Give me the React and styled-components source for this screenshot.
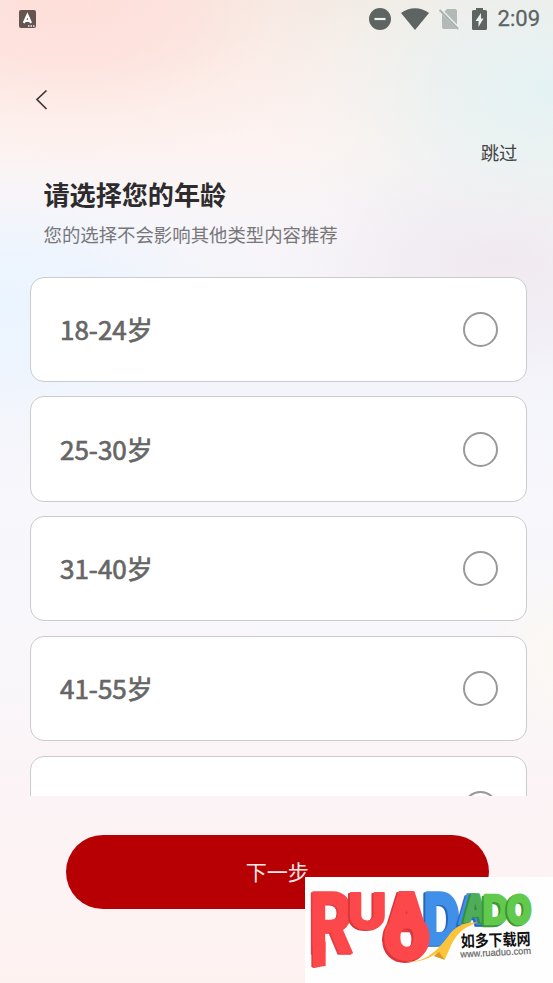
import React from "react";
import styled, { createGlobalStyle } from "styled-components";

const ages = ["18-24岁", "25-30岁", "31-40岁", "41-55岁", ""];

const GlobalStyle = createGlobalStyle`
    body {
        margin : 0;
    }
    * {
        box-sizing : border-box;
    }
`;

const Screen = styled.div`
    position : relative;
    display : flex;
    flex-direction : column;
    width : 553px;
    height : 983px;
    overflow : hidden;
    font-family : "Noto Sans CJK SC", sans-serif;
    background :
        radial-gradient(ellipse 300px 170px at 70px 0, #ffdfda 0%, rgba(255, 224, 219, 0.8) 35%, rgba(255, 230, 225, 0.3) 70%, rgba(255, 235, 230, 0) 100%),
        radial-gradient(ellipse 300px 180px at 553px 90px, #e4f2f3 0%, rgba(230, 242, 242, 0.7) 40%, rgba(236, 243, 241, 0.25) 72%, rgba(240, 243, 240, 0) 100%),
        radial-gradient(ellipse 290px 150px at 0 305px, #ebf5ff 0%, rgba(236, 245, 255, 0.75) 40%, rgba(240, 246, 255, 0.25) 75%, rgba(243, 246, 255, 0) 100%),
        radial-gradient(ellipse 240px 150px at 500px 260px, #f0e9f0 0%, rgba(241, 235, 242, 0.7) 45%, rgba(243, 238, 244, 0.2) 75%, rgba(245, 240, 246, 0) 100%),
        radial-gradient(ellipse 70px 100px at 553px 655px, #fbf8f3 0%, rgba(251, 248, 243, 0) 100%),
        linear-gradient(#f3ebe4 0, #fbf0ec 80px, #fdf3f1 140px, #f8f5f8 220px, #f3f4fa 350px, #f7f7fc 500px, #f9f7fa 680px, #fcf3f6 800px, #fdf3f4 880px, #fef2f1 983px);
`;

const StatusBar = styled.div`
    display : flex;
    align-items : center;
    justify-content : space-between;
    height : 37px;
    padding : 0 13px 0 19px;
`;

const StatusIcons = styled.div`
    display : flex;
    align-items : center;
    color : #5d6462;
`;

const Icon = styled.svg`
    display : block;
    margin-right : ${(props) => props.$gap || 0}px;
`;

const Time = styled.span`
    font-family : Roboto, sans-serif;
    font-size : 22px;
    font-weight : 400;
    line-height : 38px;
    -webkit-text-stroke : 0.3px #5d6462;
`;

const NavBar = styled.div`
    display : flex;
    align-items : center;
    height : 125px;
    padding-left : 34px;
`;

const BackButton = styled.button`
    padding : 0;
    border : 0;
    background : none;
`;

const Header = styled.header`
    display : flex;
    flex-direction : column;
    height : 127px;
    margin-top : -24px;
    padding : 0 35.5px 0 43.5px;
`;

const Skip = styled.a`
    align-self : flex-end;
    color : #444;
    font-size : 18.4px;
    line-height : 28px;
`;

const Title = styled.h1`
    margin : 9px 0 0;
    color : #2d2b2d;
    font-size : 26.1px;
    font-weight : 700;
    line-height : 38px;
`;

const Subtitle = styled.p`
    margin : 7px 0 0;
    color : #77777a;
    font-size : 18.4px;
    line-height : 28px;
`;

const AgeList = styled.div`
    display : flex;
    flex-direction : column;
    gap : 14.6px;
    height : 519px;
    margin : 11.7px 26.5px 0 29.5px;
    overflow : hidden;
`;

const AgeCard = styled.label`
    display : flex;
    flex-shrink : 0;
    align-items : center;
    justify-content : space-between;
    height : 105.2px;
    padding : 0 27.3px 1px 29.5px;
    border : 1.5px solid #cbcbcd;
    border-radius : 14px;
    background : #fff;
`;

const AgeText = styled.span`
    color : #666;
    font-size : 26px;
    line-height : 36px;
    -webkit-text-stroke : 0.7px #666;
`;

const Radio = styled.span`
    width : 35px;
    height : 35px;
    margin-top : 1px;
    border : 2px solid #999;
    border-radius : 50%;
`;

const NextButton = styled.button`
    width : 422.5px;
    height : 73.5px;
    margin : 39.5px 0 0 66px;
    padding : 0 0 1px;
    border : 0;
    border-radius : 37px;
    background : #b70004;
    color : #fbe9e6;
    font-family : inherit;
    font-size : 21px;
`;

const Watermark = styled.div`
    position : absolute;
    right : 0;
    bottom : 0;
    width : 248px;
    height : 106px;
    background : #fefefe;
`;

const LogoLetter = styled.text`
    font-family : Inter, "Open Sans", sans-serif;
    font-size : 100px;
    font-weight : 800;
    stroke-linejoin : round;
`;

// letter with a darker copy behind it for the 3D edge
const Letter = ({ children, transform, fill, side, depth = -6, weight = 2 }) => (
    <g>
        <LogoLetter transform={`translate(${depth} 4) ${transform}`} fill={side} stroke={side} strokeWidth={weight}>{children}</LogoLetter>
        <LogoLetter transform={transform} fill={fill} stroke={fill} strokeWidth={weight}>{children}</LogoLetter>
    </g>
);

const Logo = () => (
    <svg width="248" height="106" viewBox="15 21 744 318">
        <Letter transform="matrix(2 0 0 2.5 28 249)" fill="#fc484b" side="#e03e42" depth={-5}>R</Letter>
        <path d="M34 225 H60 V290 L40 294 L34 290Z" fill="#e03e42" />
        <path d="M39 215 H77 V288 L39 293Z" fill="#fc484b" />
        <Letter transform="matrix(1.6 0 0 1.5 144 176)" fill="#fc484b" side="#d8383c" weight={4}>U</Letter>
        <Letter transform="matrix(1.5 0 0 2.1 371 221)" fill="#408fe9" side="#2467bd" weight={5}>D</Letter>
        <Letter transform="matrix(1.75 0 0 1.9 253 206)" fill="#fc484b" side="#d8383c" weight={6}>A</Letter>
        <Letter transform="matrix(1.7 0 0 1.62 255 262)" fill="#fc484b" side="#d8383c" weight={11}>O</Letter>
        <Letter transform="matrix(1.05 0 0 1.25 473 163)" fill="#408fe9" side="#2467bd" weight={4}>A</Letter>
        <Letter transform="matrix(.95 0 0 1.15 490 156)" fill="#4fad57" side="#358a41" weight={4}>A</Letter>
        <Letter transform="matrix(1.1 0 0 1.2 548 163)" fill="#62c94c" side="#39963a" weight={6}>D</Letter>
        <Letter transform="matrix(.95 0 0 1.18 621 162)" fill="#62c94c" side="#39963a" weight={8}>O</Letter>
        <path d="M320 275 C375 278 410 245 442 202 C465 170 490 155 532 158 C490 170 470 193 455 222 L434 269 L402 258 L410 249 C385 268 350 279 320 275Z" fill="#fbc43b" />
        <path d="M402 258 L417 246 L434 269Z" fill="#dd9826" />
        <text x="482" y="228" textLength="210" lengthAdjust="spacingAndGlyphs" fontFamily="Noto Sans CJK SC, sans-serif" fontWeight="700" fontSize="49" fill="#111" transform="rotate(-2 590 210)">如多下载网</text>
        <text x="481" y="257" textLength="212" lengthAdjust="spacingAndGlyphs" fontFamily="Liberation Sans, sans-serif" fontSize="29" fill="#666" stroke="#666" strokeWidth=".6" transform="rotate(-3 590 250)">www.ruaduo.com</text>
    </svg>
);

export default class App extends React.Component{
    render(){
        return(
            <Screen>
                <GlobalStyle />
                <StatusBar>
                    <Icon width="17" height="18" viewBox="0 0 17 18">
                        <rect width="17" height="18" rx="2" fill="#665451" />
                        <path d="M4.8 13 L8.4 5 L12 13 M6 10.8 H10.8" fill="none" stroke="#fff" strokeWidth="2.2" />
                        <path d="M9 16 h1.5 M11.5 16 h1.5 M14 16 h1.5" stroke="#eee" strokeWidth="1.3" />
                    </Icon>
                    <StatusIcons>
                        <Icon width="22" height="22" viewBox="0 0 22 22" $gap={10}>
                            <circle cx="11" cy="11" r="11" fill="currentColor" />
                            <path d="M5.5 11 H16.5" stroke="#eff3ee" strokeWidth="2.2" />
                        </Icon>
                        <Icon width="28" height="22" viewBox="0 0 28 22" $gap={10}>
                            <path d="M0 5 C8 -1.5 20 -1.5 28 5 L14 22Z" fill="currentColor" />
                        </Icon>
                        <Icon width="20" height="22" viewBox="0 0 20 22" $gap={13}>
                            <path d="M8 1 H16 Q18 1 18 3 V17.5 L4.5 4.5Z M3 6 L17.5 20.5 Q17 21 16 21 H5 Q3 21 3 19Z" fill="#b3b9b7" />
                            <path d="M1.6 .8 L20 19.6" stroke="#eaf2f0" strokeWidth="1.6" />
                            <path d="M.6 2 L19.2 21" stroke="#a9b0ae" strokeWidth="1.8" />
                        </Icon>
                        <Icon width="15" height="22" viewBox="0 0 15 22" $gap={11}>
                            <path d="M4 0 H11 V2 H13.5 Q15 2 15 3.5 V20.5 Q15 22 13.5 22 H1.5 Q0 22 0 20.5 V3.5 Q0 2 1.5 2 H4Z" fill="currentColor" />
                            <path d="M9 5 L3.5 13 H6.5 V19 L11.5 10.5 H9Z" fill="#eaf2f0" />
                        </Icon>
                        <Time>2:09</Time>
                    </StatusIcons>
                </StatusBar>
                <NavBar>
                    <BackButton aria-label="返回">
                        <Icon width="14" height="22" viewBox="0 0 14 22">
                            <path d="M12.5 1.5 L3 10.5 L12.5 20" fill="none" stroke="#403434" strokeWidth="1.7" />
                        </Icon>
                    </BackButton>
                </NavBar>
                <Header>
                    <Skip>跳过</Skip>
                    <Title>请选择您的年龄</Title>
                    <Subtitle>您的选择不会影响其他类型内容推荐</Subtitle>
                </Header>
                <AgeList>
                    {ages.map((age, i) => (
                        <AgeCard key={i}>
                            <AgeText>{age}</AgeText>
                            <Radio />
                        </AgeCard>
                    ))}
                </AgeList>
                <NextButton>下一步</NextButton>
                <Watermark>
                    <Logo />
                </Watermark>
            </Screen>
        )
    }
}
